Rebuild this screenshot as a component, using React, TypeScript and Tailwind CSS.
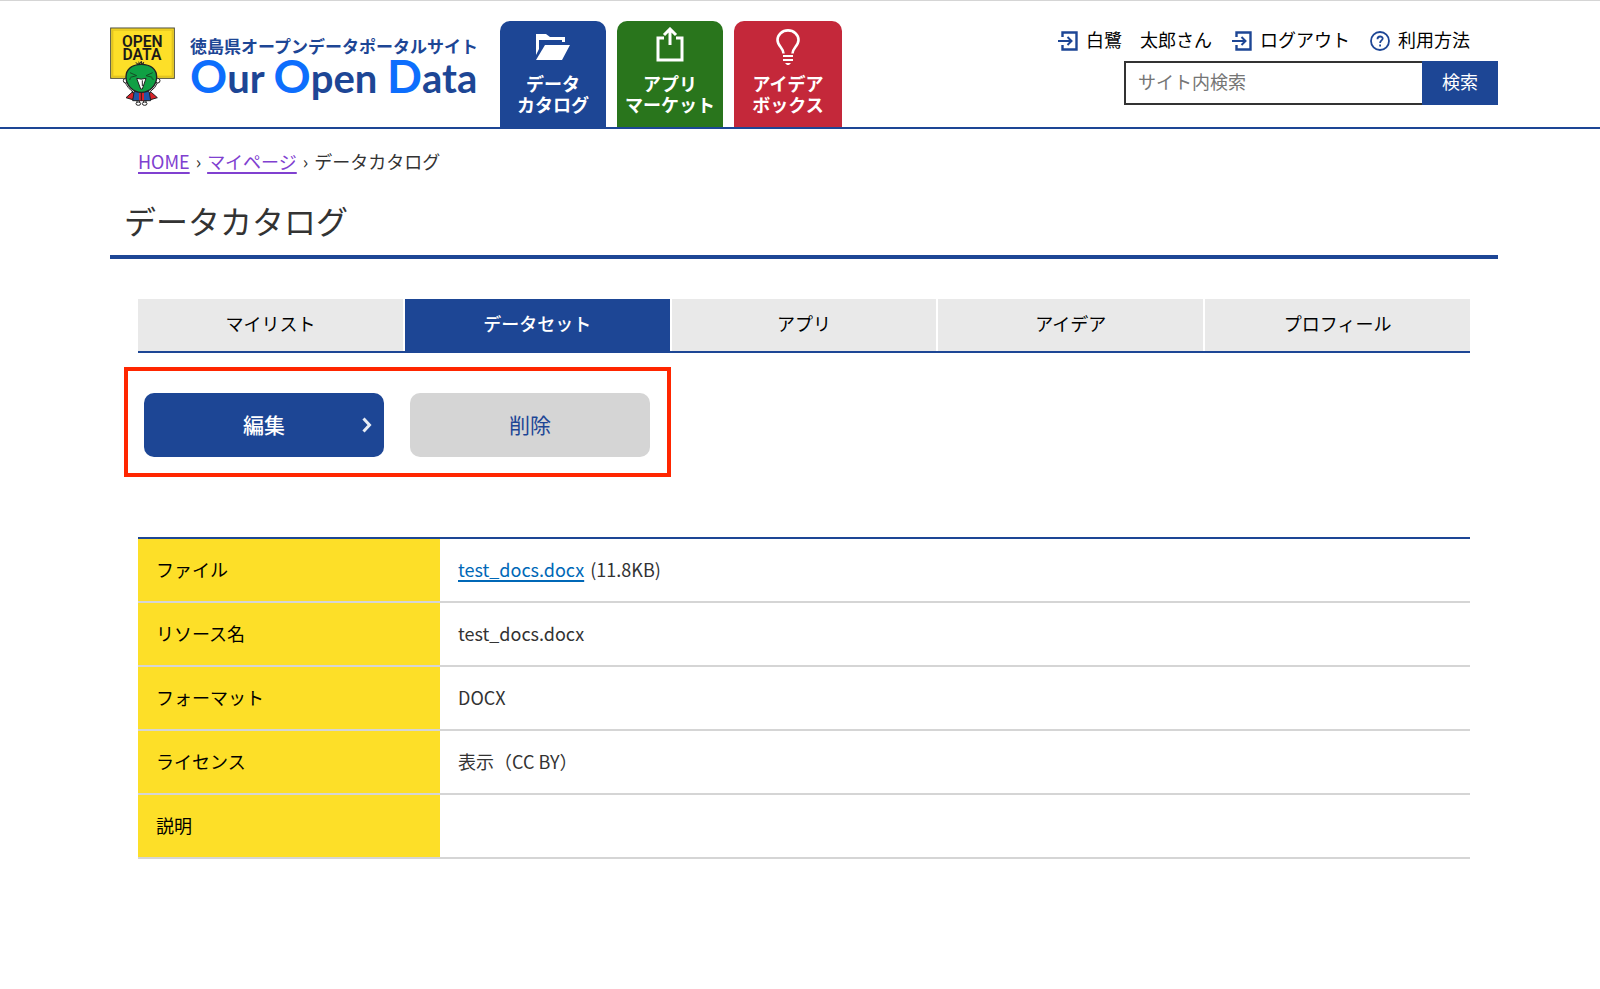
import type { ReactNode } from 'react';
import { clsx } from 'clsx';

const tabs = ['マイリスト', 'データセット', 'アプリ', 'アイデア', 'プロフィール'];

interface ResourceRow {
  label: string;
  value: ReactNode;
}

const rows: ResourceRow[] = [
  {
    label: 'ファイル',
    value: (
      <>
        <a href="#file" className="mr-[2px] text-[#0068b7] underline decoration-2 underline-offset-3">
          test_docs.docx
        </a>{' '}
        (11.8KB)
      </>
    ),
  },
  { label: 'リソース名', value: 'test_docs.docx' },
  { label: 'フォーマット', value: 'DOCX' },
  { label: 'ライセンス', value: '表示（CC BY）' },
  { label: '説明', value: '' },
];

function Mascot() {
  return (
    <svg viewBox="30 36 198 240" className="h-20 w-[66px] shrink-0" aria-hidden="true">
      <rect x="32" y="39" width="191" height="151" fill="#fddf28" stroke="#4a4a3c" strokeWidth="3" />
      <rect x="38" y="45" width="179" height="139" fill="none" stroke="#e3c41f" strokeWidth="4" />
      <g fontFamily="Roboto, sans-serif" fontWeight="600" fontSize="47" textAnchor="middle" fill="#1a1a1a">
        <text x="127" y="95">OPEN</text>
        <text x="126" y="136">DATA</text>
      </g>
      {/* legs and shoes */}
      <path d="M111 252v12M118 252v12M131 252v12M138 252v12" stroke="#222" strokeWidth="3" />
      <ellipse cx="115" cy="266" rx="7" ry="5" fill="#fff" stroke="#222" strokeWidth="3" />
      <ellipse cx="134" cy="266" rx="7" ry="5" fill="#fff" stroke="#222" strokeWidth="3" />
      {/* cape and body */}
      <path d="M96 232 78 248l20 6 8-18zM154 232l18 16-20 6-8-18z" fill="#d8232a" stroke="#222" strokeWidth="3" />
      <path d="M103 227h44l5 30H98z" fill="#2056a8" stroke="#222" strokeWidth="3" />
      <path d="M117 232h15v24h-15z" fill="#d8232a" />
      <path d="M124 232v25" stroke="#222" strokeWidth="3" />
      {/* arms */}
      <path d="M74 198q8 22 28 35l5-9q-16-12-22-29zM175 198q-8 22-28 35l-5-9q16-12 22-29z" fill="#fff" stroke="#222" strokeWidth="3" />
      <circle cx="77" cy="197" r="7" fill="#fff" stroke="#222" strokeWidth="3" />
      <circle cx="173" cy="197" r="7" fill="#fff" stroke="#222" strokeWidth="3" />
      {/* head */}
      <path d="M124 148c28 0 46 15 46 38 0 24-20 46-46 46s-46-22-46-46c0-23 18-38 46-38z" fill="#10a044" stroke="#222" strokeWidth="4" />
      <path d="M107 143q6 4 12 4l-3-7M119 147l5-8 1 8 6-5-2 6" fill="none" stroke="#222" strokeWidth="3" />
      <path d="m90 173 20 9-19 5M158 173l-20 9 19 5M87 193l6-2M161 193l-6-2" fill="none" stroke="#164a24" strokeWidth="3" />
      <path d="M110 190q14 5 28 0l-11 32h-5z" fill="#fff" stroke="#222" strokeWidth="3" />
      <path d="M127 196v17" stroke="#222" strokeWidth="3" />
    </svg>
  );
}

function FolderIcon() {
  return (
    <svg viewBox="0 0 34 27" className="h-[27px] w-[34px]" fill="#fff" aria-hidden="true">
      <path d="M0 0h10l4 3h15v5h-3V6H3v9L0 21z" />
      <path d="M9 11h25l-8 15H0z" />
    </svg>
  );
}

function ShareIcon() {
  return (
    <svg viewBox="0 0 28 36" className="h-9 w-7" fill="none" stroke="#fff" strokeWidth="3" aria-hidden="true">
      <path d="M8 11H2v22h24V11h-6" />
      <path d="M14 18V3M8 8l6-6 6 6" />
    </svg>
  );
}

function BulbIcon() {
  return (
    <svg viewBox="0 0 24 36" className="h-9 w-6" fill="none" stroke="#fff" strokeWidth="2.6" aria-hidden="true">
      <path d="M7.500 24.500C7.500 19 1.500 17 1.500 11a10.500 9.600 0 0 1 21 0c0 6-6 8-6 13.500" />
      <path d="M7 27h10M7 31h10" strokeWidth="2.200" />
      <path d="M9 34h6l-2 2h-2z" fill="#fff" stroke="none" />
    </svg>
  );
}

function ExitIcon() {
  return (
    <svg viewBox="0 0 20 20" className="size-5" fill="none" stroke="#1d4695" strokeWidth="2" aria-hidden="true">
      <path d="M4.500 6V1.500h14v17h-14V14" strokeWidth="2.400" />
      <path d="M0 10h13M9.500 6l4 4-4 4" />
    </svg>
  );
}

function HelpIcon() {
  return (
    <svg viewBox="0 0 20 20" className="size-5" fill="none" stroke="#1d4695" strokeWidth="1.800" aria-hidden="true">
      <circle cx="10" cy="10" r="9" />
      <path d="M7.500 8.200c0-3.600 5.200-3.400 5.200-.6 0 1.900-2.600 1.800-2.600 4.300" />
      <path d="M10.100 13.400v2" />
    </svg>
  );
}

function BigCap({ children }: { children: string }) {
  return <span className="text-[46px] leading-9 text-[#0d6efd]">{children}</span>;
}

function Header() {
  return (
    <header className="border-t border-b-2 border-t-[#d5d5d5] border-b-[#1d4695] bg-white">
      <div className="flex justify-between pr-[102px] pl-[110px]">
        <div className="flex gap-[26px] font-['Liberation_Sans','Noto_Sans_CJK_JP',sans-serif]">
          <a href="#top" className="flex gap-[14px] pt-[26px]">
            <Mascot />
            <span className="flex w-[284px] flex-col pt-[11px] font-bold whitespace-nowrap text-[#1d4695]">
              <span className="text-[17px] leading-5">徳島県オープンデータポータルサイト</span>
              <span className="font-['Lato',sans-serif] text-[40px] leading-9">
                <BigCap>O</BigCap>ur <BigCap>O</BigCap>pen <BigCap>D</BigCap>ata
              </span>
            </span>
          </a>
          <nav className="flex gap-[11px] pt-5 text-center text-[18px] leading-[21px] font-bold text-white">
            <a href="#catalog" className="flex h-[106px] w-[106px] flex-col items-center rounded-t-[10px] bg-[#1d4695]">
              <span className="mb-[2px] flex h-[52px] items-center">
                <FolderIcon />
              </span>
              <span>データ</span>
              <span>カタログ</span>
            </a>
            <a href="#market" className="flex h-[106px] w-[106px] flex-col items-center rounded-t-[10px] bg-[#29751c]">
              <span className="mb-[2px] flex h-[52px] items-center pb-1">
                <ShareIcon />
              </span>
              <span>アプリ</span>
              <span>マーケット</span>
            </a>
            <a href="#ideas" className="flex h-[106px] w-[108px] flex-col items-center rounded-t-[10px] bg-[#c4283a]">
              <span className="mb-[2px] flex h-[52px] items-center">
                <BulbIcon />
              </span>
              <span>アイデア</span>
              <span>ボックス</span>
            </a>
          </nav>
        </div>
        <div className="flex flex-col items-end pt-[26px]">
          <ul className="flex gap-5 pr-7 leading-6 text-black">
            <li>
              <a href="#user" className="flex h-7 items-center gap-2">
                <ExitIcon />
                <span className="pb-1">白鷺　太郎さん</span>
              </a>
            </li>
            <li>
              <a href="#logout" className="flex h-7 items-center gap-2">
                <ExitIcon />
                <span className="pb-1">ログアウト</span>
              </a>
            </li>
            <li>
              <a href="#help" className="flex h-7 items-center gap-2">
                <HelpIcon />
                <span className="pb-1">利用方法</span>
              </a>
            </li>
          </ul>
          <form className="mt-[6px] flex h-11" onSubmit={(e) => e.preventDefault()}>
            <input
              type="search"
              aria-label="サイト内検索"
              placeholder="サイト内検索"
              className="w-[298px] border-2 border-r-0 border-[#333] bg-white px-3 pb-1 placeholder:text-[#757575]"
            />
            <button type="submit" className="w-[76px] bg-[#1d4695] pb-1 text-white">
              検索
            </button>
          </form>
        </div>
      </div>
    </header>
  );
}

export default function App() {
  return (
    <div
      lang="ja"
      className="min-h-screen bg-white font-['Noto_Sans_CJK_JP',sans-serif] text-[18px] leading-7 text-[#333]"
    >
      <Header />
      <main className="pr-[102px] pl-[110px]">
        <nav aria-label="パンくずリスト" className="flex gap-[6px] px-7 pt-[18px]">
          <a href="#home" className="text-[#8040d0] underline decoration-2 underline-offset-3">HOME</a>
          <span>›</span>
          <a href="#mypage" className="text-[#8040d0] underline decoration-2 underline-offset-3">マイページ</a>
          <span>›</span>
          <span>データカタログ</span>
        </nav>
        <h1 className="mt-[21px] border-b-4 border-[#1d4695] px-[14px] pb-[11px] text-[32px] leading-[48px]">
          データカタログ
        </h1>

        <div className="px-7">
          <ul className="mt-10 flex gap-[2px] border-b-2 border-[#1d4695] text-center">
            {tabs.map((tab) => (
              <li key={tab} className="flex-1">
                <a
                  href="#tab"
                  className={clsx(
                    'block pt-[10px] pb-[14px]',
                    tab === 'データセット' ? 'bg-[#1d4695] font-medium text-white' : 'bg-[#e9e9e9] text-black',
                  )}
                >
                  {tab}
                </a>
              </li>
            ))}
          </ul>
        </div>

        <div className="mt-[14px] ml-[14px] flex w-fit gap-[26px] border-4 border-[#ff2600] pt-[22px] pr-[17px] pb-4 pl-4 text-[21px]">
          <button
            type="button"
            className="grid h-16 w-[240px] grid-cols-[1fr_auto_1fr] items-center rounded-[10px] bg-[#1d4695] px-3 font-medium text-white"
          >
            <span />
            <span className="pb-[3px]">編集</span>
            <svg viewBox="0 0 10 16" className="h-4 w-[10px] justify-self-end" fill="none" stroke="#e8edf5" strokeWidth="3" aria-hidden="true">
              <path d="m1.500 1.500 6 6.500-6 6.500" />
            </svg>
          </button>
          <button type="button" className="h-16 w-[240px] rounded-[10px] bg-[#d5d5d5] pb-[3px] text-[#1d4695]">
            削除
          </button>
        </div>

        <div className="px-7 pt-[60px]">
          <table className="w-full border-separate border-spacing-0 border-t-2 border-[#1d4695] text-left">
            <tbody>
              {rows.map((row) => (
                <tr key={row.label} className="h-16">
                  <th
                    scope="row"
                    className="w-[302px] border-b-2 border-[#d5d5d5] bg-[#fddf28] px-[18px] pb-[2px] font-normal text-black"
                  >
                    {row.label}
                  </th>
                  <td className="border-b-2 border-[#d5d5d5] px-[18px] pb-[2px]">{row.value}</td>
                </tr>
              ))}
            </tbody>
          </table>
        </div>
      </main>
    </div>
  );
}
